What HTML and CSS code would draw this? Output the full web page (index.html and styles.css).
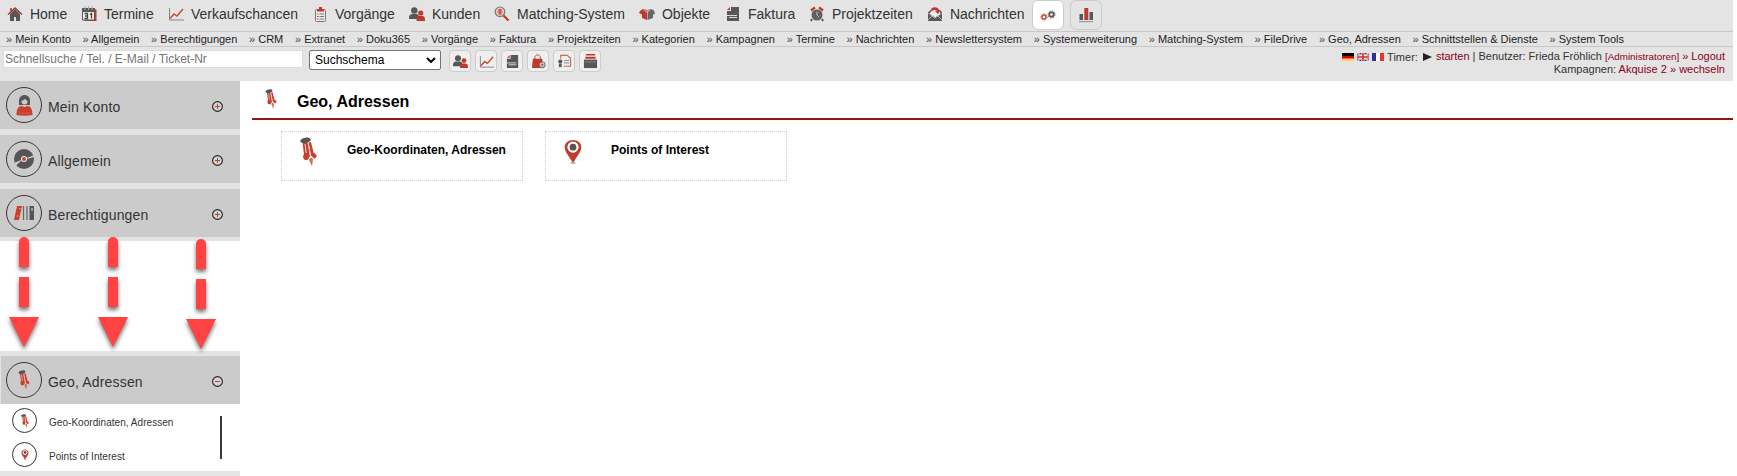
FILE: index.html
```html
<!DOCTYPE html>
<html lang="de">
<head>
    <meta charset="UTF-8">
    <title>Geo, Adressen</title>
    <link rel="stylesheet" href="styles.css">
</head>
<body>
    <!-- Shared icons -->
    <svg class="sprite" width="0" height="0">
        <symbol id="home" viewBox="0 0 16 16"><path d="M3 8l5-5 5 5v7h-4v-4H7v4H3z" fill="#575757"/><path d="M1 8.500L8 2l7 6.500M4 2v3" fill="none" stroke="#a63a32" stroke-width="1.600"/></symbol>
        <symbol id="calendar" viewBox="0 0 16 16"><path d="M14 3l1.500 1v11H4l-1-1h11z" fill="#c0392b"/><path d="M1.500 3h12v11h-12z" fill="#eee" stroke="#575757"/><path d="M1 2h13v4H1z" fill="#575757"/><path d="M4 0v4M7.500 0v4M11 0v4" stroke="#aaa"/><path d="M3.500 7.500h3v5h-3M4 10h2.500M9 8.500l1.500-1v5" fill="none" stroke="#444" stroke-width="1.300"/></symbol>
        <symbol id="chart" viewBox="0 0 16 16"><path d="M1.500 2v12H16" fill="none" stroke="#888"/><path d="M2 12.500L6 8l3 2 6-7" fill="none" stroke="#c94a35" stroke-width="1.500"/></symbol>
        <symbol id="clipboard" viewBox="0 0 16 16"><rect x="3.500" y="3.500" width="10" height="12" rx="1" fill="#f1eded" stroke="#777"/><path d="M5 3h2V1h3v2h2v2.500H5z" fill="#c0392b"/><path d="M5 8h1.500M5 10.500h1.500M5 13h1.500" stroke="#c0392b"/><path d="M7.500 8H12M7.500 10.500H12M7.500 13H12" stroke="#777"/></symbol>
        <symbol id="people" viewBox="0 0 16 16"><circle cx="5.300" cy="4.500" r="3.200" fill="#575757"/><path d="M0 13c0-4 1-4.500 3-5h4.500c2 .5 2.500 1 2.500 5z" fill="#575757"/><circle cx="11.700" cy="7" r="2.600" fill="#c0392b"/><path d="M7.500 15c0-4 1-4.500 2.500-5h3.500c2 .5 2.500 1 2.500 5z" fill="#c0392b"/></symbol>
        <symbol id="search" viewBox="0 0 16 16"><circle cx="6" cy="5.800" r="4.800" fill="#e8c8c0" stroke="#777" stroke-width="1.200"/><path d="M3.500 6h5M4 4h4M4.500 8h3M6 3v5.500" stroke="#c0392b"/><path d="M9.500 9.500l5 5" stroke="#c0392b" stroke-width="2.200"/></symbol>
        <symbol id="box" viewBox="0 0 16 16"><path d="M1 5l3-2 4 1v10l-5-2V8.500L0 7z" fill="#c0392b"/><path d="M8.500 4L12 3l3 1.500L16 8l-2 .5V12l-5.500 2z" fill="#666"/><path d="M5 3.500l3 3 3-3" fill="none" stroke="#ddd"/></symbol>
        <symbol id="invoice" viewBox="0 0 16 16"><path d="M6 1h8v14H2V5h4z" fill="#575757"/><path d="M2 4l3-3v3z" fill="#c0392b"/><path d="M2 9.500h10M4 11.500h8" stroke="#ddd"/></symbol>
        <symbol id="alarm" viewBox="0 0 16 16"><path d="M3 13l-1 2M13 13l1 2" stroke="#575757" stroke-width="2"/><circle cx="8" cy="9" r="5.500" fill="#5c5c5c"/><path d="M2 4.500l4-3M14 4.500l-4-3" stroke="#c0392b" stroke-width="2.300"/><path d="M8 6v3l2 2" fill="none" stroke="#ccc"/><circle cx="8" cy="9" r="3.500" fill="none" stroke="#888" stroke-dasharray="1 1.500"/></symbol>
        <symbol id="mail" viewBox="0 0 16 16"><path d="M1 6l7-4 7 4v9H1z" fill="#575757"/><path d="M3 5l5-3 5 3v3l-5 3.500L3 8z" fill="#eee"/><path d="M3 7c0-7 8-7 9-3h2l-3 4-3-3h2c-2-2-5-1-7 2z" fill="#c0392b"/><path d="M1 7l7 5 7-5M1 14l4-4M15 14l-4-4" fill="none" stroke="#ddd" stroke-width=".7"/></symbol>
        <symbol id="gears" viewBox="0 0 16 16"><circle cx="4" cy="10" r="2" fill="none" stroke="#c94a35" stroke-width="1.500"/><circle cx="4" cy="10" r="3.200" fill="none" stroke="#c94a35" stroke-dasharray="1 1"/><circle cx="11.500" cy="7.500" r="2.200" fill="none" stroke="#575757" stroke-width="1.800"/><circle cx="11.500" cy="7.500" r="3.500" fill="none" stroke="#575757" stroke-dasharray="1.400 1.350"/></symbol>
        <symbol id="bars" viewBox="0 0 16 16"><path d="M1.500 7H5v6H1.500zM11.500 5H15v8h-3.500z" fill="#575757"/><path d="M6.300 1h4v12h-4z" fill="#c0392b"/><path d="M1 14.700h14" stroke="#888"/></symbol>
        <symbol id="bag" viewBox="0 0 16 16"><path d="M2 5h10l1 10H1z" fill="#c0392b"/><path d="M4 7V4c0-4 6-4 6 0v3" fill="none" stroke="#c0392b"/><circle cx="12" cy="11.500" r="3" fill="#ddd" stroke="#777" stroke-width="1.200"/><path d="M10.500 11.500h3M12 10v3" stroke="#666"/></symbol>
        <symbol id="contract" viewBox="0 0 16 16"><path d="M4 5V1.500h7l3.500 3V13H7" fill="none" stroke="#c86a55" stroke-width="1.200"/><path d="M7.500 7H13M7.500 9.500H13" stroke="#888"/><circle cx="3.500" cy="8" r="2.200" fill="#575757"/><path d="M2 10h3v4.500l-1.500-1L2 14.500z" fill="#575757"/></symbol>
        <symbol id="drawer" viewBox="0 0 16 16"><path d="M3 0h10v1.700H3zM2.500 3h11v2h-11z" fill="#c0392b"/><path d="M1 6h14v9H1z" fill="#575757"/><path d="M2 8.500h12" stroke="#888"/></symbol>
        <symbol id="pin" viewBox="0 0 17 30"><path d="M2.500 5.500L8 5l2 14-2 3.500c-2 1-4 .5-4.500-1L3 19l1-2z" fill="#c8402f"/><path d="M8.500 5.500L11 5l2.500 10.500L16.500 18c.5 2-1 3.500-2.500 3.500l-3-3z" fill="#c8402f"/><path d="M8 5.500L10.500 19M5 7l1.200 9" fill="none" stroke="#f2d5cc"/><path d="M9 22.500l2-2 2 1.500-1 7.500z" fill="#cf6f4c"/><ellipse cx="5.500" cy="3.300" rx="5.300" ry="2.600" fill="#555" transform="rotate(-10 5.500 3.300)"/></symbol>
        <symbol id="poi" viewBox="0 0 18 26"><path d="M9 25L2 14C-2 7 2 1 9 1s11 6 7 13z" fill="#c23b2d"/><circle cx="9" cy="8.500" r="5.800" fill="#fff"/><circle cx="9" cy="8.500" r="3.500" fill="#555"/><path d="M6.500 25h5" stroke="#777"/></symbol>
        <symbol id="user" viewBox="0 0 20 22"><path d="M5 11V7c0-8 11-8 11 0v4z" fill="#555"/><circle cx="10.500" cy="7.500" r="3" fill="#ccc"/><path d="M7 6c2 0 3-1 4-2 1 1 2 2 3 2" fill="none" stroke="#555" stroke-width="1.500"/><path d="M2.500 21c0-6 2-9 5-9l3 1 3-1c3 0 5 3 5 9-5 1-11 1-16 0z" fill="#c8402f"/><path d="M5 19h11" stroke="#e26b5a" stroke-dasharray="1.500 1.500"/></symbol>
        <symbol id="disc" viewBox="0 0 20 20"><circle cx="10" cy="10" r="10" fill="#555"/><path d="M0 14l7-3v1l-5 4.500zM20 6l-7 3v1l7-2z" fill="#ccc"/><circle cx="10" cy="10" r="3" fill="#eee"/><circle cx="10" cy="10" r="1.900" fill="#d23b2d"/></symbol>
        <symbol id="folders" viewBox="0 0 20 16"><path d="M3 1h5L5 15H0z" fill="#c8402f"/><path d="M2.500 11h2M5 3.500h1.500" stroke="#e8a090"/><path d="M9.500 1v14M13 1v14" stroke="#666" stroke-width="1.200"/><path d="M15.500 1H20v14h-4.500z" fill="#555"/><path d="M17 3h2v3h-2z" fill="#999"/></symbol>
        <symbol id="plus" viewBox="0 0 11 11"><circle cx="5.500" cy="5.500" r="4.900" fill="#d4d4d4" stroke="#222" stroke-width="1.100"/><path d="M3 5.500h5M5.500 3v5" stroke="#c8402f"/></symbol>
        <symbol id="minus" viewBox="0 0 11 11"><circle cx="5.500" cy="5.500" r="4.900" fill="#d4d4d4" stroke="#222" stroke-width="1.100"/><path d="M3 5.500h5" stroke="#c8402f"/></symbol>
        <symbol id="arrow" viewBox="0 0 30 110"><path d="M10 30V5a5 5 0 0 1 10 0v25zM10 40h10v30H10zM0 80h30l-15 30z" fill="#ff4343"/></symbol>
    </svg>

    <div class="header">
        <div class="main-nav">
            <a class="n1"><svg><use href="#home"/></svg>Home</a>
            <a class="n2"><svg><use href="#calendar"/></svg>Termine</a>
            <a class="n3"><svg><use href="#chart"/></svg>Verkaufschancen</a>
            <a class="n4"><svg><use href="#clipboard"/></svg>Vorgänge</a>
            <a class="n5"><svg><use href="#people"/></svg>Kunden</a>
            <a class="n6"><svg><use href="#search"/></svg>Matching-System</a>
            <a class="n7"><svg><use href="#box"/></svg>Objekte</a>
            <a class="n8"><svg><use href="#invoice"/></svg>Faktura</a>
            <a class="n9"><svg><use href="#alarm"/></svg>Projektzeiten</a>
            <a class="n10"><svg><use href="#mail"/></svg>Nachrichten</a>
            <span class="tab active"><svg><use href="#gears"/></svg></span>
            <span class="tab"><svg><use href="#bars"/></svg></span>
        </div>
        <div class="sub-nav">
            <a>Mein Konto</a><a>Allgemein</a><a>Berechtigungen</a><a>CRM</a><a>Extranet</a><a>Doku365</a><a>Vorgänge</a><a>Faktura</a><a>Projektzeiten</a><a>Kategorien</a><a>Kampagnen</a><a>Termine</a><a>Nachrichten</a><a>Newslettersystem</a><a>Systemerweiterung</a><a>Matching-System</a><a>FileDrive</a><a>Geo, Adressen</a><a>Schnittstellen &amp; Dienste</a><a>System Tools</a>
        </div>
        <div class="toolbar">
            <input class="search" type="text" placeholder="Schnellsuche / Tel. / E-Mail / Ticket-Nr">
            <div class="schema">Suchschema<svg width="10" height="6" viewBox="0 0 10 6"><path d="M1 1l4 4 4-4" fill="none" stroke="#000" stroke-width="2"/></svg></div>
            <div class="tools">
                <span><svg><use href="#people"/></svg></span>
                <span><svg><use href="#chart"/></svg></span>
                <span><svg><use href="#invoice"/></svg></span>
                <span><svg><use href="#bag"/></svg></span>
                <span><svg><use href="#contract"/></svg></span>
                <span><svg><use href="#drawer"/></svg></span>
            </div>
            <div class="user-info">
                <div class="user-line">
                    <svg class="flag" viewBox="0 0 12 8"><path d="M0 0h12v3H0z" fill="#000"/><path d="M0 3h12v3H0z" fill="#d00"/><path d="M0 5.500h12V8H0z" fill="#fc6"/></svg>
                    <svg class="flag" viewBox="0 0 12 8"><path d="M0 0h12v8H0z" fill="#2b3a86"/><path d="M0 0l12 8M12 0L0 8" stroke="#fff" stroke-width="1.800"/><path d="M0 0l12 8M12 0L0 8" stroke="#d33" stroke-width=".6"/><path d="M6 0v8M0 4h12" stroke="#fff" stroke-width="3"/><path d="M6 0v8M0 4h12" stroke="#d22" stroke-width="1.600"/></svg>
                    <svg class="flag" viewBox="0 0 12 8"><path d="M0 0h4v8H0z" fill="#2b3590"/><path d="M4 0h4v8H4z" fill="#fff"/><path d="M8 0h4v8H8z" fill="#f03030"/></svg>
                    <span>Timer:</span>
                    <svg class="play" viewBox="0 0 9 8"><path d="M0 0l9 4-9 4z" fill="#222"/></svg>
                    <span><a>starten</a> | Benutzer: Frieda Fröhlich <a class="role">[Administratoren]</a> <a>» Logout</a></span>
                </div>
                <div>Kampagnen: <a>Akquise 2</a> <a>» wechseln</a></div>
            </div>
        </div>
    </div>

    <div class="content">
        <div class="sidebar">
            <div class="group"><span class="ring"><svg width="20" height="22"><use href="#user"/></svg></span><span class="label">Mein Konto</span><svg class="toggle"><use href="#plus"/></svg></div>
            <div class="group"><span class="ring"><svg width="20" height="20"><use href="#disc"/></svg></span><span class="label">Allgemein</span><svg class="toggle"><use href="#plus"/></svg></div>
            <div class="group"><span class="ring"><svg width="20" height="16"><use href="#folders"/></svg></span><span class="label">Berechtigungen</span><svg class="toggle"><use href="#plus"/></svg></div>
            <div class="skipped">
                <svg class="arrow first"><use href="#arrow"/></svg>
                <svg class="arrow second"><use href="#arrow"/></svg>
                <svg class="arrow third"><use href="#arrow"/></svg>
            </div>
            <div class="group open"><span class="ring"><svg width="12" height="20"><use href="#pin"/></svg></span><span class="label">Geo, Adressen</span><svg class="toggle"><use href="#minus"/></svg></div>
            <div class="entries">
                <div class="list">
                    <div class="entry"><span class="ring small"><svg width="8" height="14"><use href="#pin"/></svg></span><span class="label">Geo-Koordinaten, Adressen</span></div>
                    <div class="entry"><span class="ring small"><svg width="8" height="11"><use href="#poi"/></svg></span><span class="label">Points of Interest</span></div>
                </div>
                <div class="scrollbar"></div>
            </div>
        </div>

        <div class="main">
            <div class="page-title"><svg width="12" height="20"><use href="#pin"/></svg><h1>Geo, Adressen</h1></div>
            <div class="cards">
                <div class="card"><svg width="17" height="30"><use href="#pin"/></svg>Geo-Koordinaten, Adressen</div>
                <div class="card"><svg class="poi" width="18" height="25"><use href="#poi"/></svg>Points of Interest</div>
            </div>
        </div>
    </div>
</body>
</html>
```
FILE: styles.css
```css
* {
    box-sizing: border-box;
}

body {
    margin: 0;
    height: 476px;
    overflow: hidden;
    background: #fff;
    color: #333;
    font-family: Arial, "Liberation Sans", sans-serif;
}

svg {
    display: block;
    flex: none;
}

.sprite {
    display: none;
}

/* Header */
.header {
    width: 1733px;
    height: 81px;
    background: #e4e4e4;
}

.main-nav {
    display: flex;
    height: 31px;
    padding-left: 7px;
    font-size: 14px;
    letter-spacing: -0.02px;
    white-space: nowrap;
}

.main-nav a {
    display: flex;
    align-items: center;
    gap: 7px;
    height: 28px;
}

.main-nav svg,
.tools svg {
    width: 16px;
    height: 16px;
}

.n1 { width: 74px; }
.n2 { width: 87px; }
.n3 { width: 144px; }
.n4 { width: 97px; }
.n5 { width: 85px; }
.n6 { width: 145px; }
.n7 { width: 86px; }
.n8 { width: 84px; }
.n9 { width: 118px; }
.n10 { width: 105px; }

.tab {
    display: flex;
    align-items: center;
    justify-content: center;
    width: 32px;
    height: 30px;
    margin-right: 6px;
    border: 1px solid #ccc;
    border-radius: 6px;
}

.tab.active {
    background: #fff;
}

.sub-nav {
    display: flex;
    gap: 11.7px;
    height: 16px;
    padding-left: 6px;
    border-top: 1px solid #c8c8c8;
    border-bottom: 1px solid #c8c8c8;
    font-size: 11px;
    line-height: 15px;
    color: #222;
    white-space: nowrap;
}

.sub-nav a::before {
    content: "» ";
    color: #444;
}

.toolbar {
    display: flex;
    align-items: flex-start;
    height: 34px;
    padding: 3px 8px 0 3px;
}

.search {
    width: 300px;
    height: 18px;
    margin: 0 6px 0 0;
    padding: 0 1px;
    border: 1px solid #ddd;
    background: #fff;
    font: 12px Arial, "Liberation Sans", sans-serif;
}

.search::placeholder {
    color: #757575;
}

.schema {
    display: flex;
    align-items: center;
    justify-content: space-between;
    width: 132px;
    height: 20px;
    padding: 0 4px 0 5px;
    border: 1px solid #767676;
    border-radius: 2px;
    background: #fff;
    color: #000;
    font-size: 12px;
}

.tools {
    display: flex;
    gap: 4px;
    margin-left: 8px;
}

.tools span {
    display: flex;
    align-items: center;
    justify-content: center;
    width: 22px;
    height: 22px;
    border: 1px solid #ccc;
    border-radius: 4px;
    background: #efefef;
}

.tools svg {
    width: 15px;
    height: 15px;
}

.user-info {
    margin-left: auto;
    font-size: 11px;
    line-height: 12px;
    text-align: right;
}

.user-info a {
    color: #8b0018;
}

.user-info .role {
    font-size: 9.8px;
}

.user-line {
    display: flex;
    align-items: center;
    gap: 3px;
}

.flag {
    width: 12px;
    height: 8px;
}

.play {
    width: 9px;
    height: 8px;
    margin: 0 1px 0 2px;
}

/* Sidebar */
.content {
    display: flex;
}

.sidebar {
    width: 240px;
    height: 395px;
    background: #e4e4e4;
}

.group {
    display: flex;
    align-items: center;
    height: 48px;
    margin-bottom: 6px;
    padding: 0 17px 0 6px;
    background: #cbcbcb;
    font-size: 14px;
    letter-spacing: 0.17px;
}

.group .ring {
    margin: 0 6px 0 0;
}

.group .label {
    padding-top: 4px;
}

.ring {
    display: flex;
    flex: none;
    align-items: center;
    justify-content: center;
    width: 36px;
    height: 36px;
    border: 1px solid #333;
    border-radius: 50%;
}

.ring.small {
    width: 25px;
    height: 25px;
}

.toggle {
    width: 11px;
    height: 11px;
    margin: 2px 0 0 auto;
}

.skipped {
    position: relative;
    height: 110px;
    margin-top: -2px;
    background: #fff;
}

/* Arrows over the left out groups */
.arrow {
    position: absolute;
    top: -4px;
    width: 30px;
    height: 110px;
    overflow: visible;
    filter: drop-shadow(0 3px 2px rgba(0, 0, 0, 0.55));
}

.arrow.first { left: 9px; }
.arrow.second { left: 98px; }
.arrow.third { left: 186px; top: -2px; }

.group.open {
    margin: 5px 0 0 1px;
    padding-left: 5px;
}

.entries {
    display: flex;
    align-items: center;
    justify-content: space-between;
    height: 67px;
    padding: 0 18px 0 12px;
    background: #fff;
}

.list {
    display: flex;
    flex-direction: column;
    gap: 9px;
}

.entry {
    display: flex;
    align-items: center;
    gap: 12px;
    font-size: 10px;
    letter-spacing: 0.04px;
}

.entry .label {
    padding-top: 3px;
}

.scrollbar {
    width: 2px;
    height: 43px;
    background: #3a3a3a;
}

/* Main area */
.main {
    width: 1481px;
    margin-left: 12px;
    color: #000;
}

.page-title {
    display: flex;
    align-items: flex-start;
    height: 39px;
    padding: 8px 0 0 13px;
    border-bottom: 2px solid #991515;
}

.page-title h1 {
    margin: 3px 0 0 20px;
    font-size: 16px;
    line-height: 20px;
}

.cards {
    display: flex;
    gap: 22px;
    padding: 11px 0 0 29px;
}

.card {
    display: flex;
    width: 242px;
    height: 50px;
    padding: 5px 0 0 18px;
    gap: 30px;
    border: 1px dotted #ccc;
    font-size: 12px;
    font-weight: bold;
    line-height: 27px;
}

.card .poi {
    margin: 2px -1px 0 0;
}
```
